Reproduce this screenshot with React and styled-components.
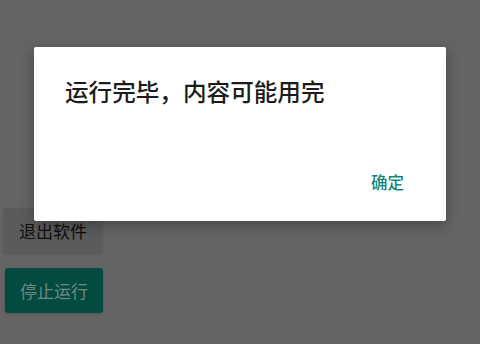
import React from "react";
import styled, { createGlobalStyle } from "styled-components";

const Global = createGlobalStyle`
  html, body { margin: 0; padding: 0; }
  body {
    background: #646464;
    font-family: "Noto Sans CJK SC", "Noto Sans", sans-serif;
    width: 480px;
    height: 344px;
    overflow: hidden;
  }
`;

const Page = styled.div`
  position: relative;
  width: 480px;
  height: 344px;
  background: #646464;
`;

const ButtonColumn = styled.div`
  display: flex;
  flex-direction: column;
  align-items: flex-start;
  gap: 15px;
  padding: 208px 0 0 4px;
`;

const RaisedButton = styled.button`
  width: 98px;
  height: 45px;
  margin-left: ${(p) => (p.$primary ? "1px" : "0")};
  border: none;
  border-radius: 3px;
  background: ${(p) => (p.$primary ? "#034a40" : "#5b5b5b")};
  color: ${(p) => (p.$primary ? "#6f8985" : "#0e0e0e")};
  font-family: "Noto Sans CJK SC", sans-serif;
  font-size: 17px;
  padding: 0;
  box-shadow: 0 1px 3px rgba(0, 0, 0, 0.18);
  display: flex;
  align-items: center;
  justify-content: center;
`;

const Dialog = styled.div`
  position: absolute;
  left: 34px;
  top: 47px;
  width: 412px;
  height: 174px;
  box-sizing: border-box;
  background: #ffffff;
  border-radius: 2px;
  box-shadow: 0 4px 14px rgba(0, 0, 0, 0.3);
  display: flex;
  flex-direction: column;
  padding: 30px 42px 0 31px;
`;

const Title = styled.div`
  font-size: 23.6px;
  line-height: 28px;
  font-weight: 500;
  color: #1c1c1c;
`;

const Actions = styled.div`
  margin-top: auto;
  margin-bottom: 27px;
  display: flex;
  justify-content: flex-end;
`;

const TextButton = styled.button`
  border: none;
  background: transparent;
  padding: 0;
  font-family: "Noto Sans CJK SC", sans-serif;
  font-size: 16.5px;
  line-height: 24px;
  font-weight: 500;
  color: #12877a;
`;

export default function App() {
  return (
    <>
      <Global />
      <Page>
        <ButtonColumn>
          <RaisedButton>退出软件</RaisedButton>
          <RaisedButton $primary>停止运行</RaisedButton>
        </ButtonColumn>
        <Dialog>
          <Title>运行完毕，内容可能用完</Title>
          <Actions>
            <TextButton>确定</TextButton>
          </Actions>
        </Dialog>
      </Page>
    </>
  );
}
